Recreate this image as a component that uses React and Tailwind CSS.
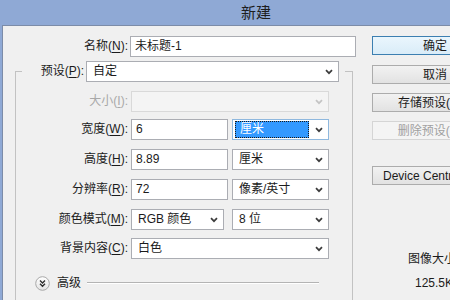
import React from "react";

function Chevron({ color = "#3c3c3c" }) {
  return (
    <svg width="8" height="6" viewBox="0 0 8 6">
      <path d="M1 1.2 L4 4.2 L7 1.2" fill="none" stroke={color} strokeWidth="1.7" />
    </svg>
  );
}

function Label({ w, children, disabled }) {
  return (
    <div
      className={`shrink-0 text-right text-[12px] leading-[21px] ${disabled ? "text-[#a8a8a8]" : "text-[#1b1b1b]"} ${w}`}
    >
      {children}
    </div>
  );
}

function Select({ w, children, disabled, focused }) {
  return (
    <div
      className={`h-[21px] flex items-center border ${
        disabled
          ? "bg-[#f4f4f4] border-[#d9d9d9]"
          : focused
          ? "bg-white border-[#8fb8de]"
          : "bg-white border-[#abadb3]"
      } ${w}`}
    >
      <div className="flex-1 min-w-0 h-full flex items-center">
        {focused ? (
          <div className="ml-[2px] h-[17px] flex-1 bg-[#3399ff] border border-dotted border-[#1a1a1a] text-white text-[12px] leading-[15px] pl-[4px]">
            {children}
          </div>
        ) : (
          <div className="pl-[6px] text-[12px] leading-[19px] text-[#1b1b1b] whitespace-nowrap">
            {children}
          </div>
        )}
      </div>
      <div className="w-[19px] h-full flex items-center justify-center shrink-0">
        <Chevron color={disabled ? "#c4c4c4" : "#3c3c3c"} />
      </div>
    </div>
  );
}

function Input({ w, children }) {
  return (
    <div
      className={`h-[21px] bg-white border border-[#abadb3] pl-[4px] text-[12px] leading-[19px] text-[#1b1b1b] whitespace-nowrap ${w}`}
    >
      {children}
    </div>
  );
}

function U({ children }) {
  return <span className="underline underline-offset-2">{children}</span>;
}

function Button({ children, mt, primary, disabled, start }) {
  return (
    <div
      className={`h-[19px] w-[126px] flex items-center ${start ? "justify-start pl-[10px]" : "justify-center"} text-[12px] whitespace-nowrap border ${
        primary
          ? "border-[#3c7fb1] bg-gradient-to-b from-[#eaf6fd] to-[#d9ecf8] text-[#1b1b1b]"
          : disabled
          ? "border-[#d5d5d5] bg-[#f4f4f4] text-[#a0a0a0]"
          : "border-[#acacac] bg-gradient-to-b from-[#f2f2f2] to-[#e2e2e2] text-[#1b1b1b]"
      } ${mt}`}
    >
      {children}
    </div>
  );
}

export default function App() {
  return (
    <div className="w-[450px] h-[300px] overflow-hidden bg-[#8fa9d5] flex flex-col font-['Liberation_Sans','Noto_Sans_CJK_SC',sans-serif]">
      <div className="h-[25px] shrink-0 flex items-center pl-[241px] text-[15px] text-[#1e1e1e] leading-none">
        新建
      </div>
      <div className="flex-1 ml-[2px] bg-[#f0f0f0] border-l border-t border-[#7c8ca8] flex min-h-0">
        {/* left column */}
        <div className="w-[357px] shrink-0 flex flex-col">
          <div className="mt-[10px] flex items-center">
            <Label w="w-[125px]">
              名称(<U>N</U>):
            </Label>
            <div className="ml-[2px]">
              <Input w="w-[226px]">未标题-1</Input>
            </div>
          </div>

          <div className="mt-[14px] ml-[12px] w-[338px] h-[260px] border-l border-t border-r border-[#c2c2c2] flex flex-col">
            {/* preset row on the line */}
            <div className="mt-[-11px] flex">
              <div className="ml-[6px] bg-[#f0f0f0] flex items-center pr-[6px]">
                <Label w="w-[62px]">
                  预设(<U>P</U>):
                </Label>
                <div className="ml-[2px]">
                  <Select w="w-[253px]">自定</Select>
                </div>
              </div>
            </div>

            <div className="mt-[9px] flex items-center">
              <Label w="w-[112px]" disabled>
                大小(<U>I</U>):
              </Label>
              <div className="ml-[3px]">
                <Select w="w-[198px]" disabled />
              </div>
            </div>

            <div className="mt-[7px] flex items-center">
              <Label w="w-[112px]">
                宽度(<U>W</U>):
              </Label>
              <div className="ml-[3px] flex">
                <Input w="w-[97px]">6</Input>
                <div className="ml-[4px]">
                  <Select w="w-[97px]" focused>
                    厘米
                  </Select>
                </div>
              </div>
            </div>

            <div className="mt-[9px] flex items-center">
              <Label w="w-[112px]">
                高度(<U>H</U>):
              </Label>
              <div className="ml-[3px] flex">
                <Input w="w-[97px]">8.89</Input>
                <div className="ml-[4px]">
                  <Select w="w-[97px]">厘米</Select>
                </div>
              </div>
            </div>

            <div className="mt-[9px] flex items-center">
              <Label w="w-[112px]">
                分辨率(<U>R</U>):
              </Label>
              <div className="ml-[3px] flex">
                <Input w="w-[97px]">72</Input>
                <div className="ml-[4px]">
                  <Select w="w-[97px]">像素/英寸</Select>
                </div>
              </div>
            </div>

            <div className="mt-[9px] flex items-center">
              <Label w="w-[112px]">
                颜色模式(<U>M</U>):
              </Label>
              <div className="ml-[3px] flex">
                <Select w="w-[93px]">RGB 颜色</Select>
                <div className="ml-[8px]">
                  <Select w="w-[97px]">8 位</Select>
                </div>
              </div>
            </div>

            <div className="mt-[8px] flex items-center">
              <Label w="w-[112px]">
                背景内容(<U>C</U>):
              </Label>
              <div className="ml-[3px]">
                <Select w="w-[198px]">白色</Select>
              </div>
            </div>

            <div className="mt-[16px] flex items-center h-[16px]">
              <div className="ml-[19px]">
                <svg width="15" height="15" viewBox="0 0 15 15">
                  <defs>
                    <linearGradient id="cg" x1="0" y1="0" x2="0" y2="1">
                      <stop offset="0" stopColor="#ffffff" />
                      <stop offset="1" stopColor="#e4e4e4" />
                    </linearGradient>
                  </defs>
                  <circle cx="7.5" cy="7.5" r="6.8" fill="url(#cg)" stroke="#a8a8a8" strokeWidth="1" />
                  <path d="M5 4.6 L7.5 7 L10 4.6 M5 7.8 L7.5 10.2 L10 7.8" fill="none" stroke="#2e2e2e" strokeWidth="1.4" />
                </svg>
              </div>
              <div className="ml-[7px] text-[12px] leading-[16px] text-[#1b1b1b]">高级</div>
              <div className="ml-[6px] w-[232px] h-[2px] border-t border-b border-t-[#b4b4b4] border-b-white" />
            </div>
          </div>
        </div>

        {/* right column */}
        <div className="ml-[12px] flex flex-col">
          <Button mt="mt-[10px]" primary>
            确定
          </Button>
          <Button mt="mt-[10px]">取消</Button>
          <Button mt="mt-[9px]">存储预设(S)...</Button>
          <Button mt="mt-[9px]" disabled>
            删除预设(D)...
          </Button>
          <Button mt="mt-[26px]" start>
            Device Central...
          </Button>
          <div className="mt-[66px] pl-[36px] text-[12px] leading-[16px] text-[#1b1b1b] whitespace-nowrap">
            图像大小:
          </div>
          <div className="mt-[8px] pl-[43px] text-[12px] leading-[16px] text-[#1b1b1b] whitespace-nowrap">
            125.5K
          </div>
        </div>
      </div>
    </div>
  );
}
